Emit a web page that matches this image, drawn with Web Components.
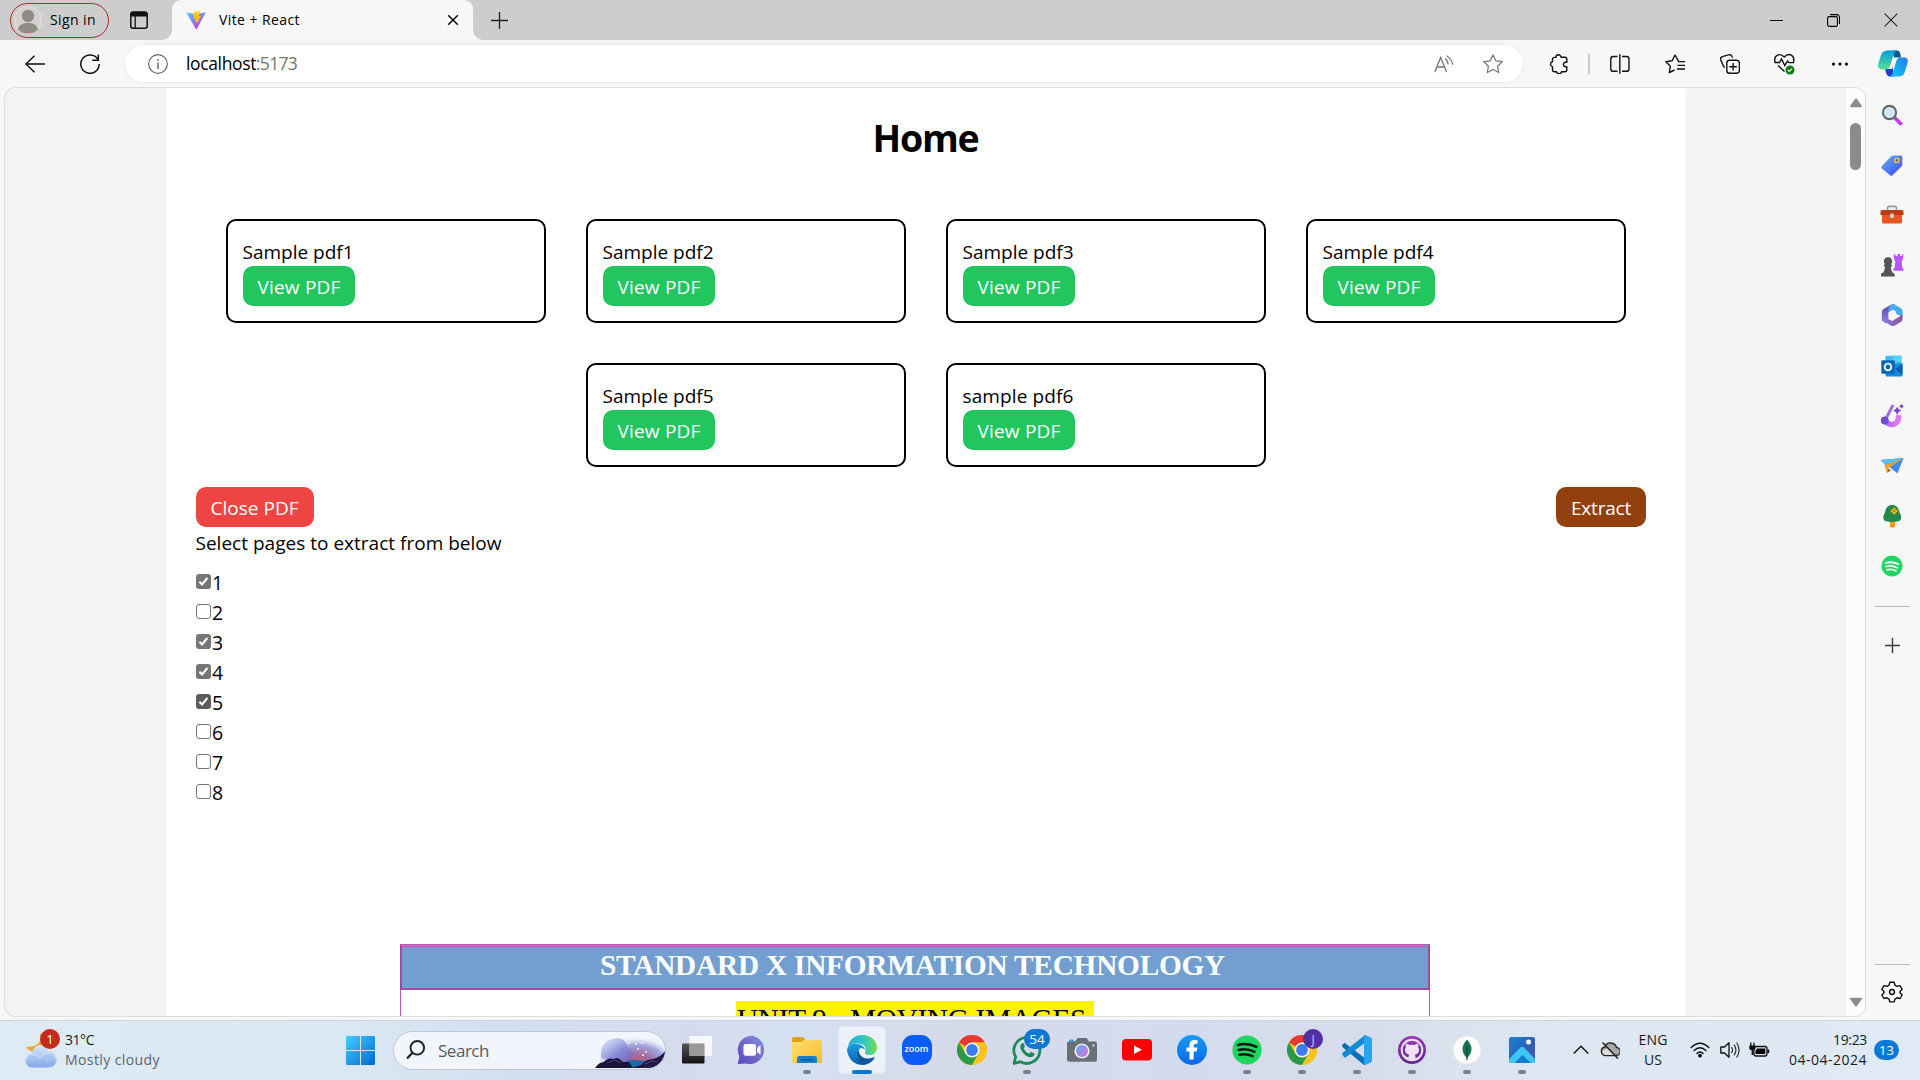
<!DOCTYPE html>
<html lang="en">
<head>
<meta charset="utf-8">
<title>Vite + React</title>
<style>
html,body{margin:0;height:100%;overflow:hidden}
body{font-family:"Open Sans","Noto Sans",sans-serif;color:#000}
</style>
</head>
<body>
<desktop-screen></desktop-screen>
<script>
const chromeSvg = `<circle cx="15" cy="15" r="15" fill="#fcc31e"/><path d="M15 15 2 7.5A15 15 0 0 1 28 7.5H15z" fill="#e53a30"/><path d="M2 7.5A15 15 0 0 0 15 30l6.5-11.3L15 15 8.5 18.7z" fill="#2a9a48"/><path d="M15 7.5H28A15 15 0 0 1 15 30l6.5-11.2z" fill="#fcc31e"/><circle cx="15" cy="15" r="7.4" fill="#fff"/><circle cx="15" cy="15" r="5.9" fill="#3b7ded"/>`;
/* name: [width, height, markup]; strokes use currentColor */
const ICONS = {
avatar:[28,28,`<circle cx="14" cy="14" r="13.5" fill="#d3d0cd" stroke="#e4e2e0"/><circle cx="14" cy="10" r="6.2" fill="#8f8b87"/><path d="M4 23.500c1-5 5-6.500 10-6.500s9 1.500 10 6.500A13 13 0 0 1 14 27.500 13 13 0 0 1 4 23.500z" fill="#8f8b87"/>`],
workspace:[18,18,`<rect x=".8" y="1" width="16.400" height="16.200" rx="2.500" fill="none" stroke="#111" stroke-width="1.500"/><path d="M1 5.500V3a2 2 0 0 1 2-2h12a2 2 0 0 1 2 2v2.500z" fill="#111"/><path d="M5.200 5v12" stroke="#111" stroke-width="1.300"/>`],
vite:[20,20,`<defs><linearGradient id="a" x1="0" y1="0" x2=".6" y2="1"><stop stop-color="#41d1ff"/><stop offset="1" stop-color="#bd34fe"/></linearGradient><linearGradient id="b" x1="0" y1="0" x2="0" y2="1"><stop stop-color="#ffea83"/><stop offset=".3" stop-color="#ffc61a"/><stop offset="1" stop-color="#ffa800"/></linearGradient></defs><path d="M.3 2.500 10 4l9.700-1.500L10.300 19.700z" fill="url(#a)"/><path d="m13.800.2-6 1.200-.6 7.600 2.300-.4-.7 3.600 1.900-.4-.5 3.200 5-9.200-2.600.4 2.200-5.700z" fill="url(#b)"/>`],
x:[12,12,`<path d="M1.200 1.200l9.600 9.600M10.800 1.200 1.200 10.800" stroke="currentColor" stroke-width="1.400"/>`],
winx:[14,14,`<path d="M.7.700l12.600 12.600M13.300.700.7 13.300" stroke="#222" stroke-width="1.100"/>`],
plus:[17,17,`<path d="M8.500 0v17M0 8.500h17" stroke="#222" stroke-width="1.300"/>`],
plus2:[15,15,`<path d="M7.500 0v15M0 7.500h15" stroke="#3a3a3a" stroke-width="1.400"/>`],
min:[13,13,`<path d="M0 6.500h13" stroke="#000"/>`],
max:[13,13,`<rect x=".6" y="2.600" width="9.800" height="9.800" rx="1.600" fill="none" stroke="#000" stroke-width="1.100"/><path d="M3 .6h6.500a3 3 0 0 1 3 3V10" fill="none" stroke="#000" stroke-width="1.100"/>`],
back:[20,18,`<path d="M20 9H1M9.500.7 1 9l8.500 8.300" fill="none" stroke="#111" stroke-width="1.400"/>`],
reload:[20,20,`<path d="M17.800 5.200A9.200 9.200 0 1 0 19.200 10M18.300.5v5.800h-6" fill="none" stroke="#111" stroke-width="1.500"/>`],
info:[20,20,`<circle cx="10" cy="10" r="9.300" fill="none" stroke="#666" stroke-width="1.200"/><path d="M10 8.500V15M10 5v1.700" stroke="#555" stroke-width="1.300"/>`],
aloud:[20,18,`<path d="M.8 17 6.700 2.500 12.600 17M3 12h7.500" fill="none" stroke="#777" stroke-width="1.300"/><path d="M11 3.500q3 2.200 3.200 6M12.600.7q5.500 3.300 6 9" fill="none" stroke="#777" stroke-width="1.200"/>`],
star:[20,20,`<path d="M10 1l2.800 5.800 6.400.900-4.600 4.500 1.100 6.300L10 15.500l-5.700 3 1.100-6.300L.8 7.700l6.400-.9z" fill="none" stroke="#777" stroke-width="1.250" stroke-linejoin="round"/>`],
ext:[20,20,`<path d="M7 3.400a2.500 2.500 0 0 1 5-.2h3.800a2 2 0 0 1 2 2V8.200h-1.600a2.300 2.300 0 0 0 0 4.500h1.600v3.100a2 2 0 0 1-2 2h-3.300a2.500 2.500 0 0 1-4.900 0H5.500a2 2 0 0 1-2-2v-3.200a2.500 2.500 0 0 1 0-4.900V5.400a2 2 0 0 1 2-2z" fill="none" stroke="#111" stroke-width="1.400" stroke-linejoin="round"/>`],
split:[20,20,`<path d="M7.500 2.500H3.200a2.400 2.400 0 0 0-2.400 2.400v10a2.400 2.400 0 0 0 2.400 2.400h4.300M12 2.500h4.600A2.400 2.400 0 0 1 19 4.900v10a2.400 2.400 0 0 1-2.400 2.400H12M9.800.3v19.400" fill="none" stroke="#111" stroke-width="1.400"/>`],
fav:[20,20,`<path d="M20 7.600h-6.300L10 1 7.200 6.800.8 7.700l4.600 4.500-1.100 6.300L9.500 16M12.500 11.400H20M12 15h8" fill="none" stroke="#111" stroke-width="1.400" stroke-linejoin="round"/>`],
coll:[20,20,`<rect x="6.800" y="6.300" width="12.600" height="12.900" rx="2.800" fill="none" stroke="#111" stroke-width="1.400"/><path d="M13.100 9v7.500M9.300 12.800h7.600M4.700 13.400 3.500 12.300.8 6a2.600 2.600 0 0 1 1.500-3.300L8.500.9A2.700 2.700 0 0 1 12 2.500l.6 1.300" fill="none" stroke="#111" stroke-width="1.400"/>`],
heart:[21,22,`<path d="M1 9C-.5 2 6-.5 10.200 4 15-.7 21 2 19.600 9M.3 9.500h5.200l2-3.500 3.300 6.500 2.600-4.300 1.400 1.400h5.200M4 12.500l6.500 6" fill="none" stroke="#111" stroke-width="1.400"/><circle cx="16" cy="17" r="4.500" fill="#107c10"/><path d="m13.800 17 1.500 1.500 2.700-2.900" fill="none" stroke="#fff" stroke-width="1.100"/>`],
dots:[18,6,`<circle cx="2.500" cy="3" r="1.600"/><circle cx="9" cy="3" r="1.600"/><circle cx="15.500" cy="3" r="1.600"/>`],
copilot:[30,27,`<defs><linearGradient id="a" x1="0" y1="0" x2="0" y2="1"><stop stop-color="#079ce0"/><stop offset="1" stop-color="#58df8e"/></linearGradient><linearGradient id="b" x1="1" y1="0" x2="0" y2="1"><stop stop-color="#2a7be8"/><stop offset=".55" stop-color="#14a9f7"/><stop offset="1" stop-color="#22c8f5"/></linearGradient></defs><path d="M14 .5h5c2 0 2.800 1.500 3.500 4l.6 3h-7z" fill="#0a5796"/><path d="M7 19h6.500l1-2 1.500 9.500h-4C9 26.500 8 23 7 19z" fill="#1740d0"/><path d="M9.500.5h10Q16.700.8 15.500 5l-3 9.500Q11 19.500 7 19.500H3.500Q-.8 19 .3 14L3 5Q4.800.5 9.500.5z" fill="url(#a)"/><path d="M22.500 7.500h4q4.200.5 3 5.500l-2.500 8.500q-1.500 5-6.500 5H11.500q2.500-.5 3.500-4.500l3-10q1.200-4.500 4.500-4.500z" fill="url(#b)"/>`],
mag:[22,22,`<path d="m14 14 5.500 5.500" stroke="#c23af0" stroke-width="3.800" stroke-linecap="round"/><path d="m12.500 12.500 2.500 2.500" stroke="#777" stroke-width="2.500"/><circle cx="8.500" cy="8.500" r="6.600" fill="#cfe9fc" stroke="#666" stroke-width="2.100"/>`],
tag:[22,22,`<defs><linearGradient id="a" x1="0" y1="0" x2="1" y2="1"><stop stop-color="#6cb3ff"/><stop offset="1" stop-color="#3646f0"/></linearGradient></defs><path d="m.8 12 9.500-9.700Q11 1.500 12.500 1.500H20q1.300 0 1.300 1.300v8q0 1-.8 1.800l-9 8.600q-1.200 1-2.400 0L.8 14.400q-1-1.200 0-2.400z" fill="url(#a)"/><circle cx="15.800" cy="6.500" r="2.100" fill="#4765df" stroke="#ffd030" stroke-width="1.400"/>`],
tool:[24,20,`<path d="M7.500 5.500V3.300q0-2 2-2h5q2 0 2 2v2.200" fill="none" stroke="#999" stroke-width="1.700"/><rect x="2" y="8" width="20" height="10.500" rx="1.500" fill="#e45720"/><path d="M2 5h20q1.500 0 1.500 1.500V10H.5V6.500Q.5 5 2 5z" fill="#bd3b12"/><rect x="10.200" y="8.500" width="3.700" height="4.500" rx="1" fill="#ccd2d5"/>`],
game:[24,24,`<path d="M13.500 1.500h2V3h2V1h2.500v2h2V1.500h1.500L22.500 7.500l-.8 1 .6 6 1.200 1.200v2h-10v-2l1.200-1.200.6-6-.8-1z" fill="#bd54f4"/><path d="M8 4a4.300 4.300 0 0 1 3 7.300l1.300 1.200-1.500 1.700q.5 3.500 1.500 5l2.300 1.800V23.500H1v-2.700l2.500-1.600q1.200-2 1.500-5l-1.500-1.700L5 11.300A4.300 4.300 0 0 1 8 4z" fill="#555"/>`],
office:[22,24,`<defs><linearGradient id="a" x1="0" y1="0" x2="0" y2="1"><stop stop-color="#3f4fae"/><stop offset="1" stop-color="#a77be4"/></linearGradient><linearGradient id="b"><stop stop-color="#7d78dc"/><stop offset="1" stop-color="#8d549f"/></linearGradient></defs><path d="m9.500 2-7 4Q.8 7 .8 9v7q0 2 1.500 2.800L5 20.500Q7.500 20 7.500 16V9L14 5V1.700Q12 .5 9.500 2z" fill="url(#a)"/><path d="M9.500 2Q12 .5 14 1.700l6 3.500q1.500 1 1.500 3V14l-6.500-3.300V8.500L11.500 6.500 7.500 9q-.5-5 2-7z" fill="#48aaf0"/><path d="M21.500 11v5q0 2-1.400 2.800l-6.200 3.600q-2 1.100-4 0L4 19l3.500-2.800 4 1.800 3.500-2.500 3-1.500z" fill="url(#b)"/><path d="m11.300 8.300 3.600 2v4l-3.600 2-3.600-2v-4z" fill="#f7f7f7"/>`],
outlook:[22,22,`<rect x="4.500" y=".7" width="16" height="13" rx="1" fill="#41b9f4"/><path d="M12 .7h8.500v6H12z" fill="#54d4ff"/><path d="M5 9h8l8.500-1v12.500q0 1-1 1H6q-1.500 0-1.500-1.500z" fill="#1488d9"/><path d="m21.500 9-7 5 7 6z" fill="#0a5fae"/><rect x=".3" y="5.300" width="13.500" height="13.500" rx="1.300" fill="#0767b8"/><circle cx="7" cy="12" r="3.300" fill="none" stroke="#fff" stroke-width="1.800"/>`],
paint:[24,26,`<defs><linearGradient id="a"><stop stop-color="#b26af2"/><stop offset="1" stop-color="#e477f5"/></linearGradient></defs><path d="M5 17a7 7 0 0 0 13.500-1.500L19 12" fill="none" stroke="url(#a)" stroke-width="5.500"/><path d="M12.500 3 6 15.500" stroke="#9d70e8" stroke-width="3" stroke-linecap="round"/><circle cx="4.800" cy="17.500" r="3.900" fill="#714bd0"/><path d="m17.200 4.500 1 2.100 2.300 1-2.300 1-1 2.400-1-2.400-2.300-1 2.300-1zM21.500 1.500l.5 1.300 1.300.5-1.300.5-.5 1.300-.5-1.300-1.300-.5 1.300-.5z" fill="#713fdb" stroke="#713fdb"/>`],
plane:[24,20,`<path d="m.5 4 23-2-6 15.500-5-4z" fill="#3f8cf0"/><path d="m.5 4 23-2L6 10z" fill="#55bbf5"/><path d="M4.500 9.500 23.500 2 8 12.500 7 17z" fill="#f5a21d"/><path d="m7 17 1-4.500 3 1.800z" fill="#a86400"/>`],
tree:[20,24,`<path d="M8 16h5v7q-2.500 1-5 0z" fill="#f3981d"/><path d="M10.300 1C15.500 1 17 6 17.500 8.500q3.500 5 0 8.500-7.500 2-14.500 0Q-.5 14 3 8.500 4 1 10.300 1z" fill="#23894a"/><path d="m12.200 4.300 1.200 1.500 1.600 1.200-1.600 1.300-1.200 1.500-1.200-1.500L9.400 7 11 5.800z" fill="#f0b711" stroke="#f0b711" stroke-width="1.400"/><circle cx="12.200" cy="7" r="1.100" fill="#d85c16"/>`],
spots:[22,22,`<circle cx="11" cy="11" r="10.500" fill="#1ed760"/><path d="M4.500 8q6.500-2 13 1.200M5 11.500q6-1.500 11 1.200M5.800 14.800q5-1.200 9 1" fill="none" stroke="#fff" stroke-width="1.800" stroke-linecap="round"/>`],
gear:[22,22,`<path d="m8.800 1.200-.7 3-2.200 1.200L3 4.600.8 8.300 3 10.500v1.300L.8 14l2.200 3.500 2.900-.7 2.200 1.300.7 2.800h4.300l.8-2.800 2.100-1.300 3 .7 2.200-3.500-2.200-2.200v-1.300l2.200-2.200L19 4.600l-3 .8-2.100-1.200-.8-3z" fill="none" stroke="#111" stroke-width="1.400" stroke-linejoin="round"/><circle cx="11" cy="11" r="2.400" fill="none" stroke="#111" stroke-width="1.500"/>`],
weather:[34,38,`<defs><linearGradient id="a" x1="0" y1="0" x2="0" y2="1"><stop stop-color="#d8e7fb"/><stop offset="1" stop-color="#82a9ea"/></linearGradient></defs><path d="M15 2Q18 16 1 16q4 6 12 5l10-10z" fill="#f3a42d"/><path d="M7.500 36.500a7 7 0 0 1-.5-14Q8 14.500 15 14q7 0 8.500 6.500a8 8 0 0 1 .5 16z" fill="url(#a)"/><path d="M1 29q1-6 7-6 5 0 6.500 4 3-5 9-5t7.500 6" fill="none" stroke="#e3edfc" opacity=".7"/>`],
win:[29,29,`<defs><linearGradient id="a" x1="0" y1="0" x2="1" y2="1"><stop stop-color="#45ceff"/><stop offset="1" stop-color="#0068cf"/></linearGradient></defs><path d="M1.200 0H14v14H0V1.200Q0 0 1.200 0zM15 0h12.800Q29 0 29 1.200V14H15zM0 15h14v14H1.200Q0 29 0 27.800zM15 15h14v12.800q0 1.200-1.200 1.200H15z" fill="url(#a)"/>`],
search:[20,20,`<circle cx="11.300" cy="7.800" r="6.800" fill="none" stroke="#222" stroke-width="1.900"/><path d="M6.500 12.800 1 18.500" stroke="#222" stroke-width="2.300"/>`],
art:[70,36,`<defs><radialGradient id="a" cx=".58" cy=".7" r=".6"><stop stop-color="#cf5560"/><stop offset=".35" stop-color="#a06ea6"/><stop offset=".7" stop-color="#a3a8e0"/><stop offset="1" stop-color="#e9eefa" stop-opacity="0"/></radialGradient><linearGradient id="b" x1="0" y1="0" x2="1" y2="1"><stop stop-color="#dfe4f7"/><stop offset=".6" stop-color="#7f88d6"/><stop offset="1" stop-color="#7b62b8"/></linearGradient><clipPath id="c"><path d="M0 0h52a18 18 0 0 1 0 36H0z"/></clipPath></defs><g clip-path="url(#c)"><ellipse cx="36" cy="22" rx="34" ry="22" fill="url(#a)"/><path d="M6 26Q5 14 12 9q9-5 17-1 2 5 4 8 5 3 5 8l-4 6z" fill="url(#b)" opacity=".85"/><path d="M24 36q4-8 14-8l12 1 14-1v8z" fill="#176aa6"/><path d="M0 36q4-6 9-6 4-5 9-3l5-1 5 4 6 0 4 6z" fill="#171536"/><path d="m36 36 10-3q5-6 12-6 8-2 12-8v17z" fill="#241742"/><path d="m12 31 8-3 6 3m24 1 7-3 5 1" fill="none" stroke="#5c3f88"/><g fill="#fff2dc"><circle cx="34" cy="11" r="1"/><circle cx="40" cy="7" r=".8"/><circle cx="41" cy="12" r="1"/><circle cx="47" cy="11" r="1"/><circle cx="43" cy="17" r=".9"/><circle cx="51" cy="20" r=".9"/><circle cx="48" cy="23" r="1"/></g></g>`],
task:[30,30,`<defs><linearGradient id="a" x1="0" y1="0" x2="0" y2="1"><stop stop-color="#555"/><stop offset="1" stop-color="#111"/></linearGradient></defs><rect x="0" y="8.500" width="22.500" height="20" rx="1" fill="url(#a)"/><rect x="7.500" y="1" width="22.500" height="20" rx="1" fill="#fff" opacity=".78"/><path d="M7.500 8.500h15V21h-15z" fill="#999"/>`],
meet:[30,30,`<defs><linearGradient id="a" x1="1" y1="0" x2="0" y2="1"><stop stop-color="#7e93ea"/><stop offset=".5" stop-color="#7468c4"/><stop offset="1" stop-color="#5a48c0"/></linearGradient></defs><path d="M15 .8A14.200 14.200 0 1 1 9 28.500L.8 29l1.500-7.500A14.200 14.200 0 0 1 15 .8z" fill="url(#a)"/><rect x="6.500" y="9" width="12.500" height="11.800" rx="2.200" fill="#fff"/><path d="m20 13 3.500-3v10L20 17z" fill="#fff"/>`],
folder:[30,30,`<defs><linearGradient id="a" x1="0" y1="0" x2="1" y2="1"><stop stop-color="#ffdf78"/><stop offset="1" stop-color="#f8bd28"/></linearGradient></defs><path d="M0 4Q0 2 2 2h8q1.500 0 2.500 1.500L14 5.500 12 10H0z" fill="#e0a010"/><path d="M0 7h8q2 0 3-1l1-1h16q2 0 2 2v19.500q0 1.500-1.500 1.500h-27Q0 28 0 26.500z" fill="url(#a)"/><path d="M5 28v-4.500Q5 21 7.500 21h15q2.500 0 2.500 2.500V28z" fill="#1780c8"/><path d="M9 24.800h12.500" stroke="#0a528c" stroke-width="1.200"/>`],
edge:[30,30,`<defs><linearGradient id="a"><stop stop-color="#2aa8e0"/><stop offset=".5" stop-color="#30c4c8"/><stop offset="1" stop-color="#6fe04c"/></linearGradient><linearGradient id="b" x1="0" y1="0" x2="0" y2="1"><stop stop-color="#1b9de2"/><stop offset="1" stop-color="#0a62b6"/></linearGradient></defs><path d="M1 11C3 4 8 0 15 0c9 0 15 6 15 12.500 0 5-3.500 7.500-7.500 7.500-3.500 0-5-1.500-4.500-3 1.500-2 1.500-7.500-6-8.500Q5 7.500 1 11z" fill="url(#a)"/><path d="M0 15Q.5 8.500 8.500 8.500c6 0 9.500 4 9.500 7-4-3.500-9 0-8 5.500 1 5 6 8.500 9 8.500Q6 32 1.200 20 0 17 0 15z" fill="url(#b)"/><path d="M12 13.500q-5 7 1 12 6 4.500 14.500-2.500.8-1-.5-.8-10 3.800-14.500-3.200-1.500-3-.5-5.500z" fill="#0c559b"/><path d="M12.500 13.500q2.500-1.500 5.500 1.800-.5 1.700 0 2.700-4 .5-5.500-1.500z" fill="#fff"/><path d="M27.500 23q-4 7-12.500 7-5-2.500-5.500-8 6 7 18 1z" fill="#10589d"/>`],
zoom:[30,30,`<rect width="30" height="30" rx="11" fill="#0b5cff"/>`],
chrome:[30,30,chromeSvg],
whats:[30,30,`<path d="M2 28.500 3.700 22A13 13 0 1 1 8.500 26.700z" fill="none" stroke="#1d8a58" stroke-width="2.800" stroke-linejoin="round"/><path d="M9 9q2-2 3 .2l1 2.300-1.400 2q2 4 5.700 5.200l1.700-1.900 3.300 1.600q1 1-1 3-3.500 2-8-1.200Q6.500 14 9 9z" fill="#1d8a58"/>`],
camera:[30,26,`<rect x="2" y="2.500" width="5" height="4" rx="1" fill="#35a5e5"/><path d="M2 4.500h6L10.500 1h9L22 4.500h6q2 0 2 2V23q0 1.800-2 1.800H2Q0 24.800 0 23V6.500q0-2 2-2z" fill="#697178"/><circle cx="15" cy="14" r="7.600" fill="#eee"/><circle cx="15" cy="14" r="6" fill="url(#a)"/><circle cx="26.500" cy="8.500" r="1.200" fill="#ccc"/><defs><linearGradient id="a" x1="0" y1="0" x2="1" y2="1"><stop stop-color="#44b5f2"/><stop offset=".5" stop-color="#a28be5"/><stop offset="1" stop-color="#df6edb"/></linearGradient></defs>`],
yt:[30,22,`<rect width="30" height="21.500" rx="4" fill="#f00"/><path d="m12 6.500 8 4.300-8 4.300z" fill="#fff"/>`],
fb:[30,30,`<defs><linearGradient id="a" x1="0" y1="0" x2="0" y2="1"><stop stop-color="#199cf5"/><stop offset="1" stop-color="#0866e8"/></linearGradient></defs><circle cx="15" cy="15" r="15" fill="url(#a)"/><path d="M12.500 24.500v-8H9.500v-4h3V10q0-5 5-5 1.500 0 3 .3v3.500h-1.800q-2 0-2 2v1.700h3.600l-.7 4h-2.900v8z" fill="#fff"/>`],
spot:[30,30,`<circle cx="15" cy="15" r="14.600" fill="#1ed760"/><path d="M6 10q9-2.800 18.500 1.800M6.500 15q8-2 16 1.800M7.500 19.700q7-1.500 13 1.500" fill="none" stroke="#0b160e" stroke-width="2.600" stroke-linecap="round"/>`],
code:[30,30,`<path d="m0 10 2.500-2.300L22 22.500V30L1 12.500q-1-1.200-1-2.500z" fill="#0870b8"/><path d="m.3 20 2 2.200q1 .5 2-.3L23 7.500V0L1 17.500q-1.300 1.200-.7 2.500z" fill="#128bd0"/><path d="M22 0q1-.2 2 .3l5 2.500q1 .6 1 1.700v21q0 1-1 1.700l-5 2.500q-1.500.7-2 0z" fill="#27a5f0"/>`],
git:[30,30,`<defs><linearGradient id="a" x1="0" y1="0" x2="0" y2="1"><stop stop-color="#983ab8"/><stop offset="1" stop-color="#5e268e"/></linearGradient></defs><circle cx="15" cy="15" r="14" fill="url(#a)"/><circle cx="15" cy="15" r="10.300" fill="none" stroke="#f0e3f7" stroke-width="2"/><path d="M9 8.500q2 .2 3.500 1.500 2.500-.7 5 0Q19 8.700 21 8.500q.6 1.700.2 3.500 1.500 2 .6 4.700-1 2.500-4 3 .8 1 .7 2.500v3h-7v-2.200q-2.500.4-3.300-1.500l-1-1.300q1.500-.3 2.300 1.500 1 .6 2 .2 0-1.300.7-2.200-3-.4-4-3-.9-2.700.6-4.700-.4-1.800.2-3.500z" fill="#f0e3f7"/>`],
mongo:[30,30,`<circle cx="15" cy="15" r="14" fill="#fcfcfc" stroke="#ddd" stroke-width=".5"/><path d="M15 4.500q9 10 0 18.500-9-8.500 0-18.500z" fill="#14744e"/><path d="M15 10v15" stroke="#0a4a36" stroke-width="1.200"/>`],
photos:[26,26,`<defs><linearGradient id="a" x1="0" y1="0" x2="1" y2="1"><stop stop-color="#1785d8"/><stop offset=".5" stop-color="#2b62bb"/><stop offset="1" stop-color="#554a9c"/></linearGradient><clipPath id="c"><rect width="26" height="26" rx="2"/></clipPath></defs><g clip-path="url(#c)"><rect width="26" height="26" fill="url(#a)"/><path d="M0 22 11.500 10.500q1.800-1.500 3.500 0L27 23v4H0z" fill="#3cc7f5"/><path d="m5.500 26 8-8L22 26z" fill="#177cc9"/><circle cx="19.500" cy="5" r="2.500" fill="#fff"/></g>`],
chev:[16,10,`<path d="M.7 8.500 8 1.200l7.300 7.300" fill="none" stroke="#111" stroke-width="1.400"/>`],
cloud:[20,18,`<path d="M5 14.500A4.300 4.300 0 0 1 5 6q1.500-4.500 6-4t5.500 4.500a4 4 0 0 1-.5 8z" fill="#a9a9a9" stroke="#222" stroke-width="1.300"/><path d="M8 7 15 14H5Q2 13 3 9.500z" fill="#ddd"/><path d="m2.500 1.500 15.500 16" stroke="#222" stroke-width="1.500"/>`],
wifi:[20,16,`<path d="M.7 6q9.300-9.500 18.600 0M3.600 9q6.400-6.500 12.800 0M6.500 11.800q3.500-3.500 7 0" fill="none" stroke="#111" stroke-width="1.300"/><circle cx="10" cy="13.700" r="1.900" fill="#111"/>`],
vol:[20,18,`<path d="M.8 6h3.700L9 1.700v14.600L4.500 12H.8z" fill="none" stroke="#111" stroke-width="1.300" stroke-linejoin="round"/><path d="M11.500 6q2 3 0 6M14 3.700q3.800 5.300 0 10.600M16.600 1.500q5 7.500 0 15" fill="none" stroke="#333" stroke-width="1.200"/>`],
batt:[21,16,`<rect x="5" y="4.500" width="13" height="9.500" rx="2" fill="none" stroke="#111" stroke-width="1.300"/><path d="M8 6.500h8.300V12H6.500V9zM18.500 7.500h1.700v3.500h-1.700z"/><path d="M.3 3.500h6.200v2.800q0 2-2.200 2V13H2.600V8.300Q.3 8.300.3 6.300zM1.200.5h1.300V4H1.200zM4.300.5h1.300V4H4.300z" fill="#111"/>`],
up:[12,10,`<path d="M5 1q1-1.200 2 0l4.700 6.700q.6 1.300-.7 1.500H1Q-.3 9 .3 7.700z" fill="#8b8b8b"/>`],
down:[12,10,`<path d="M5 9q1 1.200 2 0l4.700-6.700Q12.300 1 11 .8H1Q-.3 1 .3 2.300z" fill="#8b8b8b"/>`],
check:[15,15,`<path d="m3.400 7.700 2.700 2.800 5.300-6.700" fill="none" stroke="#fff" stroke-width="2.100"/>`]
};
const define = (name, html, setup) => customElements.define(name, class extends HTMLElement {
  connectedCallback() {
    if (this.shadowRoot) return;
    this.attachShadow({mode:'open'}).innerHTML = typeof html === 'function' ? html(this) : html;
    if (setup) setup(this, this.shadowRoot);
  }
});

define('ui-icon', host => {
  const [w,h,m] = ICONS[host.getAttribute('name')];
  return `<style>:host{display:inline-flex;flex:none;width:${w}px;height:${h}px}svg{display:block}</style><svg width="${w}" height="${h}" viewBox="0 0 ${w} ${h}" aria-hidden="true">${m}</svg>`;
});

define('tab-strip', `<style>
:host{display:flex;height:40px;background:#cdcdcd;align-items:center;flex:none}
.profile{display:flex;align-items:center;box-sizing:border-box;width:99px;height:35px;border:1.500px solid #b3262b;border-radius:18px;margin-left:10px;padding-left:3px;gap:8px;font-size:14px}
.ws{margin-left:21px}
.tab{display:flex;align-items:center;box-sizing:border-box;width:301px;height:40px;margin-left:24px;background:#f7f7f7;border-radius:9px 9px 0 0;padding:0 14px;font-size:14px;position:relative}
.tab:before,.tab:after{content:"";position:absolute;bottom:0;width:10px;height:10px}
.tab:before{left:-10px;background:radial-gradient(circle at 0 0,transparent 9.500px,#f7f7f7 10px)}
.tab:after{right:-10px;background:radial-gradient(circle at 100% 0,transparent 9.500px,#f7f7f7 10px)}
.title{margin-left:13px;flex:1}
fit-text{padding-bottom:2px}
.new{margin-left:18px}
.sys{display:flex;gap:44px;margin-left:auto;margin-right:22px;align-items:center}
</style>
<div class="profile"><ui-icon name="avatar"></ui-icon><fit-text w="46">Sign in</fit-text></div>
<ui-icon class="ws" name="workspace"></ui-icon>
<div class="tab"><ui-icon name="vite"></ui-icon><span class="title"><fit-text w="81">Vite + React</fit-text></span><ui-icon name="x"></ui-icon></div>
<ui-icon class="new" name="plus"></ui-icon>
<div class="sys"><ui-icon name="min"></ui-icon><ui-icon name="max"></ui-icon><ui-icon name="winx"></ui-icon></div>`);

define('address-bar', `<style>
:host{display:flex;height:47px;flex:none;background:#f7f7f7;align-items:center}
.back{margin-left:25px}.reload{margin-left:35px}
.pill{display:flex;flex:none;align-items:center;box-sizing:border-box;width:1398px;height:37px;margin-left:25px;background:#fff;border-radius:19px;box-shadow:0 0 4px #0001;padding:0 20px 0 23px}
.url{display:flex;margin-left:18px;flex:1;font-size:17.500px;padding-bottom:1px}
.port{color:#757575}
.star{margin-left:29px}
.cell{display:flex;flex:none;width:55px;justify-content:center}
.sep{flex:none;width:2px;height:20px;background:#ccc;margin:0 2px 0 2px}
.ext{margin-left:8px}
.copilot{width:51px}
</style>
<ui-icon class="back" name="back"></ui-icon><ui-icon class="reload" name="reload"></ui-icon>
<div class="pill"><ui-icon name="info"></ui-icon><span class="url"><fit-text w="70">localhost</fit-text><fit-text class="port" w="41">:5173</fit-text></span><ui-icon name="aloud"></ui-icon><ui-icon class="star" name="star"></ui-icon></div>
<span class="cell ext"><ui-icon name="ext"></ui-icon></span><span class="sep"></span>
${['split','fav','coll','heart','dots','copilot'].map(n=>`<span class="cell ${n}"><ui-icon name="${n}"></ui-icon></span>`).join('')}`);

define('side-bar', `<style>
:host{display:flex;flex-direction:column;box-sizing:border-box;width:54px;padding-right:2px;flex:none;align-items:center;background:#f7f7f7}
.cell{display:flex;width:52px;height:50.100px;align-items:center;justify-content:center}
.list{padding-top:3px}
.line{width:35px;height:1px;background:#bbb}
.first{margin-top:15px}
.plus{margin-top:31px}
.last{margin-top:auto}
.gear{margin:16px 0 17px}
</style><div class="list">${['mag','tag','tool','game','office','outlook','paint','plane','tree','spots'].map(n=>`<div class="cell"><ui-icon name="${n}"></ui-icon></div>`).join('')}</div>
<div class="line first"></div><ui-icon class="plus" name="plus2"></ui-icon>
<div class="line last"></div><ui-icon class="gear" name="gear"></ui-icon>`);

define('action-button', `<style>
:host{display:flex;align-items:center;justify-content:center;box-sizing:border-box;height:40px;border-radius:10px;color:#fff;font-size:19px;line-height:30px;padding-top:1px;width:112px;background:#22c55e}
:host([tone=red]){background:#ef4444;width:118px;padding-right:1px}
:host([tone=brown]){background:#92400e;width:90px}
</style><slot></slot>`);

define('pdf-card', `<style>
:host{display:block;box-sizing:border-box;width:320px;height:104px;border:2px solid #000;border-radius:10px;padding:15px}
.name{height:29px;padding-top:1px;line-height:30px;font-size:19px;margin-left:-.5px}
</style><div class="name"><fit-text w="111"></fit-text></div><action-button><fit-text w="83">View PDF</fit-text></action-button>`,
(host, root) => { root.querySelector('fit-text').textContent = host.getAttribute('name'); });

define('page-check', `<style>
:host{display:flex;height:30px;font-size:19.500px;line-height:30px}
.box{display:flex;box-sizing:border-box;width:15px;height:15px;margin-top:7px;border:1.250px solid #767676;border-radius:3px;background:#fff}
:host([checked]) .box{background:#767676;border:0}
:host([hover]) .box{background:#5c5c5c}
ui-icon{display:none}:host([checked]) ui-icon{display:flex}
.n{margin-left:1px;padding-top:1px}
</style><span class="box"><ui-icon name="check"></ui-icon></span><span class="n"><slot></slot></span>`);

define('pdf-sheet', `<style>
:host{display:flex;flex-direction:column;align-items:center;box-sizing:border-box;width:1030px;border:solid #b45aa8;border-width:0 1.500px;font-family:"Liberation Serif",serif;white-space:nowrap}
.head{box-sizing:border-box;width:1030px;height:46px;background:#729fcf;border:2px solid #a04aa6;border-top:3px double #b85aac;color:#fff;font-weight:700;font-size:29.300px;line-height:34px;padding-top:1px;padding-right:5px;flex:none;display:flex;justify-content:center}
.unit{margin-top:11px;height:36px;background:#fff200;width:357px;font-size:29.300px;line-height:36px;padding-left:1px}
</style><div class="head"><fit-text w="625">STANDARD X INFORMATION TECHNOLOGY</fit-text></div><div class="unit"><fit-text w="349">UNIT 9 - MOVING IMAGES</fit-text></div>`);

define('home-page', `<style>
:host{display:block;box-sizing:border-box;width:1520px;height:928px;background:#fff;padding:0 30px;margin-left:161px;overflow:hidden;border-radius:4px 4px 0 0;flex:none}
h1{display:flex;justify-content:center;margin:0 1px 0 0;padding-top:27px;height:44px;font-size:37.500px;line-height:45px;font-weight:700}
.cards{display:flex;flex-wrap:wrap;justify-content:center;gap:40px;margin-top:60px}
.row{display:flex;justify-content:space-between;margin:20px 10px 0 0}
.hint{height:29px;line-height:30px;font-size:19px;padding-top:1px;margin:0 0 10px -.5px}
pdf-sheet{margin:137px 0 0 204px}
</style><h1><fit-text w="106">Home</fit-text></h1>
<div class="cards">${['Sample pdf1','Sample pdf2','Sample pdf3','Sample pdf4','Sample pdf5','sample pdf6'].map(n=>`<pdf-card name="${n}"></pdf-card>`).join('')}</div>
<div class="row"><action-button tone="red"><fit-text w="88">Close PDF</fit-text></action-button><action-button tone="brown"><fit-text w="60">Extract</fit-text></action-button></div>
<div class="hint"><fit-text w="306">Select pages to extract from below</fit-text></div>
<div class="checks"><page-check checked>1</page-check><page-check>2</page-check><page-check checked>3</page-check><page-check checked>4</page-check><page-check checked hover>5</page-check><page-check>6</page-check><page-check>7</page-check><page-check>8</page-check></div>
<pdf-sheet></pdf-sheet>`);

define('scroll-track', `<style>
:host{display:flex;flex-direction:column;align-items:center;box-sizing:border-box;width:19px;background:#fcfcfc;padding:10px 0 9px;margin-left:auto;flex:none}
.thumb{width:11px;height:47px;border-radius:6px;background:#8b8b8b;margin-top:15px}
.down{margin-top:auto}
</style><ui-icon name="up"></ui-icon><div class="thumb"></div><ui-icon class="down" name="down"></ui-icon>`);

define('app-button', host => `<style>
:host{display:flex;width:55px;height:48px;align-items:center;justify-content:center;position:relative;flex:none}
.tile{display:flex;width:48px;height:48px;align-items:center;justify-content:center;box-sizing:border-box;border-radius:5px}
:host([active]) .tile{background:#ebf0f9;border:1px solid #dfe5f2}
.dot{display:none;position:absolute;bottom:0;left:50%;width:8px;height:4px;border-radius:2px;background:#7d8189;transform:translateX(-50%)}
:host([open]) .dot{display:block}
:host([active]) .dot{display:block;width:20px;background:#0a78d4}
.badge{position:absolute;display:flex;align-items:center;justify-content:center;height:20px;top:3px;border-radius:10px;color:#fff;font-size:13.500px}
.count{width:26px;left:25px;background:#0a78d4}
.user{width:20px;left:29px;background:#5130a4;color:#d6c9f2;font-size:12px}
.word{position:absolute;color:#fff;font:600 9px/10px "Open Sans",sans-serif;top:18px}
</style><span class="tile"><ui-icon name="${host.getAttribute('icon')}"></ui-icon></span><span class="dot"></span>` +
  ['count','user','word'].filter(k => host.hasAttribute(k)).map(k => `<span class="${k === 'word' ? k : 'badge ' + k}">${host.getAttribute(k)}</span>`).join(''));

define('task-bar', `<style>
:host{display:flex;box-sizing:border-box;height:60px;padding-bottom:1px;flex:none;align-items:center;border-top:1px solid #ccd5e2;background:linear-gradient(90deg,#dfebf4 0,#dbe7f2 18%,#d3dff0 27%,#d5dbec 36%,#d4e0f0 41%,#d5daea 50%,#d3dcee 62%,#d6dcea 70%,#dde7f1 80%,#dfeaf5 100%);font-size:14px;color:#1b1b1b}
.weather{display:flex;align-items:center;margin-left:25px;width:321px;position:relative}
.red{position:absolute;left:15px;top:-1px;width:20px;height:20px;border-radius:10px;background:#c42b1c;color:#fff;display:flex;align-items:center;justify-content:center;font-size:13px}
.lines{display:flex;flex-direction:column;line-height:20px;margin-left:6px}
.muted{color:#5b6570}
.search{display:flex;align-items:center;box-sizing:border-box;width:273px;height:39px;margin:0 3px 0 18px;border:1px solid #bcc6dc;border-radius:20px;background:#f2f6fc;padding-left:12px;font-size:17px;color:#555b62}
.search fit-text{margin-left:12px}
.art{margin-left:auto}
.apps{display:flex}
.tray{display:flex;align-items:center;margin-left:auto;margin-right:21px}
.lang{width:32px;align-items:center;margin:0 21px 0 17px}
.clock{align-items:flex-end;margin-left:19px;width:78px}
.cloud{margin-left:11px}.vol{margin-left:10px}.batt{margin-left:9px}
.num{display:flex;align-items:center;justify-content:center;width:25px;height:20px;border-radius:10px;background:#0a78d4;color:#fff;font-size:13px;margin-left:7px}
</style>
<div class="weather"><ui-icon name="weather"></ui-icon><span class="red">1</span><div class="lines"><fit-text w="29">31°C</fit-text><fit-text class="muted" w="95">Mostly cloudy</fit-text></div></div>
<ui-icon name="win"></ui-icon>
<div class="search"><ui-icon name="search"></ui-icon><fit-text w="51">Search</fit-text><ui-icon class="art" name="art"></ui-icon></div>
<div class="apps"><app-button icon="task"></app-button><app-button icon="meet"></app-button><app-button icon="folder" open></app-button><app-button icon="edge" active></app-button><app-button icon="zoom" word="zoom"></app-button><app-button icon="chrome"></app-button><app-button icon="whats" open count="54"></app-button><app-button icon="camera"></app-button><app-button icon="yt"></app-button><app-button icon="fb"></app-button><app-button icon="spot" open></app-button><app-button icon="chrome" open user="J"></app-button><app-button icon="code" open></app-button><app-button icon="git" open></app-button><app-button icon="mongo" open></app-button><app-button icon="photos" open></app-button></div>
<div class="tray"><ui-icon name="chev"></ui-icon><ui-icon name="cloud" class="cloud"></ui-icon><div class="lines lang"><fit-text w="29">ENG</fit-text><fit-text w="18">US</fit-text></div><ui-icon name="wifi"></ui-icon><ui-icon name="vol" class="vol"></ui-icon><ui-icon name="batt" class="batt"></ui-icon><div class="lines clock"><fit-text w="34">19:23</fit-text><fit-text w="78">04-04-2024</fit-text></div><span class="num">13</span></div>`);

define('desktop-screen', `<style>
:host{display:flex;flex-direction:column;width:1920px;height:1080px;overflow:hidden;background:#f7f7f7}
.mid{display:flex;flex:1;min-height:0}
.view{display:flex;box-sizing:border-box;width:1862px;height:930px;margin:0 0 0 4px;background:#f1f3f5;border:1px solid #dedede;border-radius:11px;overflow:hidden}
side-bar{margin-left:auto}
</style><tab-strip></tab-strip><address-bar></address-bar><div class="mid"><div class="view"><home-page></home-page><scroll-track></scroll-track></div><side-bar></side-bar></div><task-bar></task-bar>`);

/* Tracks its text so that the run takes exactly w pixels. Defined last, when every style is in place. */
define('fit-text', `<style>:host{display:inline-block;white-space:nowrap}</style><span><slot></slot></span>`, (host, root) => {
  const w = +host.getAttribute('w'), n = host.textContent.length;
  const natural = root.querySelector('span').getBoundingClientRect().width;
  if (natural) { host.style.letterSpacing = ((w - natural) / n).toFixed(3) + 'px'; host.style.width = w + 'px'; }
});
</script>
</body>
</html>
